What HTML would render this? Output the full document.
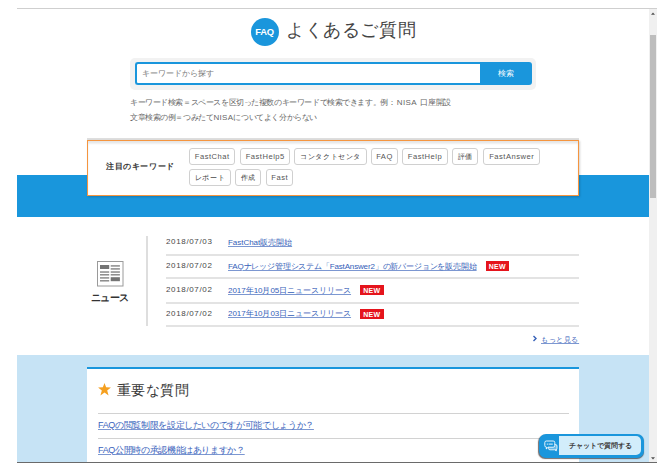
<!DOCTYPE html>
<html><head><meta charset="utf-8">
<style>
*{box-sizing:border-box;margin:0;padding:0}
html,body{width:666px;height:472px;overflow:hidden;background:#fff;font-family:"Liberation Sans",sans-serif;color:#333}
.abs{position:absolute}
#topline{left:17px;top:8px;width:640px;height:1px;background:#cfcfcf}
#botline{left:17px;top:462px;width:640px;height:1px;background:#6a6a6a}
#sb{left:649px;top:9px;width:8px;height:453px;background:#f0f0f0}
#thumb{left:650px;top:35px;width:6px;height:163px;background:#bdbdbd}
#vp{left:17px;top:9px;width:632px;height:453px;overflow:hidden;background:#fff}
/* header */
#faq{left:250.5px;top:18px;width:28px;height:28px;border-radius:50%;background:#1a96dc;color:#fff;font-weight:bold;font-size:9.4px;text-align:center;line-height:27px;letter-spacing:-0.2px}
#title{left:286px;top:18px;font-size:18px;line-height:24px;color:#444;white-space:nowrap;letter-spacing:0.6px}
#sbox{left:130px;top:58px;width:406px;height:32px;border-radius:5px;background:#f2f2f2}
#inp{left:135px;top:62px;width:350px;height:23px;border:2px solid #1a96dc;border-right:none;border-radius:3px 0 0 3px;background:#fff}
#ph{left:142px;top:62px;height:23px;line-height:23px;font-size:8px;color:#777;white-space:nowrap}
#btn{left:480px;top:62px;width:51.5px;height:23px;border-radius:0 3px 3px 0;background:#1a96dc;color:#fff;font-size:8px;line-height:23px;text-align:center}
.help{left:130px;margin-top:0.7px;font-size:8px;color:#666;white-space:nowrap;line-height:10px;letter-spacing:-0.42px}
/* keyword box */
#band{left:17px;top:175px;width:632px;height:42px;background:#1996dc}
#kbox{left:87px;top:140px;width:492px;height:55.5px;background:#fff;border:1.3px solid #f5953f;box-shadow:1px 1px 2px rgba(0,0,0,0.18), inset 0 2.5px 2px rgba(0,0,0,0.1)}
#kshadow{left:87px;top:138.3px;width:492px;height:1.7px;background:rgba(0,0,0,0.13);filter:blur(0.3px)}
#klabel{left:106px;top:161px;font-size:8px;letter-spacing:0.6px;font-weight:bold;color:#333;line-height:11px;white-space:nowrap}
.tag{position:absolute;height:17px;border:1px solid #d0d0d0;border-radius:3px;background:#fff;font-size:7.6px;color:#555;line-height:15px;text-align:center;white-space:nowrap;letter-spacing:0.5px;text-indent:0.5px}
.tj{font-size:7px;letter-spacing:0.6px;text-indent:0.6px;color:#3a3a3a}
/* news */
#vline{left:146px;top:235.5px;width:1.5px;height:90.5px;background:#dedede}
#nlabel{left:90.5px;top:292px;font-size:10px;font-weight:bold;color:#333;line-height:12px;white-space:nowrap;letter-spacing:-0.45px}
.date{position:absolute;left:166px;font-size:8px;color:#484848;line-height:10px;white-space:nowrap;letter-spacing:0.65px}
.nlink{position:absolute;left:228px;top:0;font-size:8px;letter-spacing:-0.03px;color:#3560b8;text-decoration:underline;text-decoration-color:rgba(53,96,184,0.65);line-height:10px;white-space:nowrap}
.sep{position:absolute;height:1px;background:#d2d2d2}
.new{position:absolute;width:23.5px;height:10px;background:#e5141c;color:#fff;font-weight:bold;font-size:7px;line-height:11.2px;text-align:center;letter-spacing:0.25px}
#more{left:541px;top:334.5px;font-size:7px;letter-spacing:0.62px;color:#3560b8;text-decoration:underline;text-decoration-color:rgba(53,96,184,0.65);line-height:10px;white-space:nowrap}
#arrow{left:530.5px;top:334px;width:8px;height:9px}
/* important */
#lblue{left:17px;top:355px;width:632px;height:108px;background:#c6e3f5}
#card{left:87px;top:367px;width:492px;height:100px;background:#fff;border-top:2.5px solid #1a96dc}
#star{left:96.6px;top:381.8px;width:15px;height:14px}
#qtitle{left:117px;top:381px;font-size:14px;line-height:18px;color:#383838;white-space:nowrap;letter-spacing:0.4px}
.qlink{position:absolute;left:98px;font-size:9px;letter-spacing:-0.35px;color:#3a63bc;text-decoration:underline;text-decoration-color:rgba(53,96,184,0.65);line-height:10px;white-space:nowrap}
/* chat */
#chat{left:538.5px;top:433.5px;width:105.2px;height:24.5px;border-radius:7px;background:#1a96dc;box-shadow:-0.5px 1px 1px rgba(40,30,30,0.65)}
#chatin{left:559px;top:436px;width:82.2px;height:19px;border-radius:0 5px 5px 0;background:#d2edfb}
#chattxt{left:569px;top:441px;font-size:7.2px;font-weight:bold;color:#404040;line-height:10px;white-space:nowrap}
#chaticon{left:543.6px;top:439.6px;width:14px;height:12px}
</style></head><body>
<div id="topline" class="abs"></div>
<div id="vp" class="abs"></div>
<div id="sb" class="abs"></div>
<div id="thumb" class="abs"></div>
<svg class="abs" style="left:650px;top:11px" width="6" height="5"><path d="M1 3.8 L3 1.6 L5 3.8 Z" fill="#505050"/></svg>
<svg class="abs" style="left:650px;top:456px" width="6" height="5"><path d="M1 1.2 L3 3.4 L5 1.2 Z" fill="#505050"/></svg>

<!-- header -->
<div id="faq" class="abs">FAQ</div>
<div id="title" class="abs">よくあるご質問</div>
<div id="sbox" class="abs"></div>
<div id="inp" class="abs"></div>
<div id="ph" class="abs">キーワードから探す</div>
<div id="btn" class="abs">検索</div>
<div class="abs help" style="top:97px">キーワード検索＝スペースを区切った複数のキーワードで検索できます。例：<span style="letter-spacing:0.35px;margin-left:1.5px">NISA</span><span style="display:inline-block;width:3.5px"></span>口座開設</div>
<div class="abs help" style="top:112px">文章検索の例＝つみたて<span style="letter-spacing:0.35px">NISA</span>についてよく分からない</div>

<!-- keywords -->
<div id="band" class="abs"></div>
<div id="kshadow" class="abs"></div>
<div id="kbox" class="abs"></div>
<div id="klabel" class="abs">注目のキーワード</div>
<div class="tag" style="left:189px;top:148px;width:46px">FastChat</div>
<div class="tag" style="left:240px;top:148px;width:50px">FastHelp5</div>
<div class="tag tj" style="left:294px;top:148px;width:72.5px">コンタクトセンタ</div>
<div class="tag" style="left:371px;top:148px;width:26.5px">FAQ</div>
<div class="tag" style="left:402px;top:148px;width:45.5px">FastHelp</div>
<div class="tag tj" style="left:452px;top:148px;width:26px">評価</div>
<div class="tag" style="left:483px;top:148px;width:57px">FastAnswer</div>
<div class="tag tj" style="left:189px;top:169px;width:41.5px">レポート</div>
<div class="tag tj" style="left:235px;top:169px;width:26px">作成</div>
<div class="tag" style="left:266px;top:169px;width:27px">Fast</div>

<!-- news -->
<div id="vline" class="abs"></div>
<svg class="abs" style="left:97px;top:261px" width="27" height="26" viewBox="0 0 27 26">
<rect x="0.5" y="0.5" width="25.5" height="24.5" fill="#fff" stroke="#9a9a9a" stroke-width="1"/>
<rect x="3" y="4" width="9.2" height="4" fill="#747474"/>
<rect x="13.7" y="4.3" width="9.2" height="1.25" fill="#747474"/>
<rect x="13.7" y="7.3" width="9.2" height="1.25" fill="#747474"/>
<rect x="3" y="10.4" width="9.2" height="1.25" fill="#747474"/>
<rect x="13.7" y="10.4" width="9.2" height="1.25" fill="#747474"/>
<rect x="3" y="13.2" width="9.2" height="1.25" fill="#747474"/>
<rect x="13.7" y="13.2" width="9.2" height="1.25" fill="#747474"/>
<rect x="3" y="16.3" width="9.2" height="1.25" fill="#747474"/>
<rect x="3" y="19.2" width="9.2" height="1.25" fill="#747474"/>
<rect x="13.7" y="16.2" width="9.2" height="4" fill="#747474"/>
</svg>
<div id="nlabel" class="abs">ニュース</div>

<div class="date" style="top:237px">2018/07/03</div>
<div class="nlink" style="top:238px">FastChat販売開始</div>
<div class="sep" style="left:166px;top:254px;width:413px;height:2px;background:#e3e3e3"></div>
<div class="date" style="top:261px">2018/07/02</div>
<div class="nlink" style="top:262px;letter-spacing:-0.16px">FAQナレッジ管理システム「FastAnswer2」の新バージョンを販売開始</div>
<div class="new" style="left:485.5px;top:261px">NEW</div>
<div class="sep" style="left:166px;top:277.4px;width:413px;height:2px;background:#e3e3e3"></div>
<div class="date" style="top:285px">2018/07/02</div>
<div class="nlink" style="top:286px">2017年10月05日ニュースリリース</div>
<div class="new" style="left:360px;top:284.5px">NEW</div>
<div class="sep" style="left:166px;top:301.5px;width:413px;height:2px;background:#e3e3e3"></div>
<div class="date" style="top:308.5px">2018/07/02</div>
<div class="nlink" style="top:309px">2017年10月03日ニュースリリース</div>
<div class="new" style="left:360px;top:308.8px">NEW</div>
<div class="sep" style="left:166px;top:325.4px;width:413px;height:2px;background:#e3e3e3"></div>
<svg id="arrow" class="abs" viewBox="0 0 8 9"><path d="M2.5 2 L5 4.5 L2.5 7" fill="none" stroke="#3560b8" stroke-width="1.4"/></svg>
<div id="more" class="abs">もっと見る</div>

<!-- important -->
<div id="lblue" class="abs"></div>
<div id="card" class="abs"></div>
<svg id="star" class="abs" viewBox="0 0 24 24"><path d="M12 1.8 L14.8 9.2 L23 9.4 L16.6 14.4 L19 23 L12 18.2 L5 23 L7.4 14.4 L1 9.4 L9.2 9.2 Z" fill="#f5a020"/></svg>
<div id="qtitle" class="abs">重要な質問</div>
<div class="sep" style="left:98px;top:412.5px;width:471px"></div>
<div class="qlink" style="top:420px">FAQの閲覧制限を設定したいのですが可能でしょうか？</div>
<div class="sep" style="left:98px;top:438px;width:471px"></div>
<div class="qlink" style="top:444.5px">FAQ公開時の承認機能はありますか？</div>

<!-- chat -->
<div id="chat" class="abs"></div>
<div id="chatin" class="abs"></div>
<svg id="chaticon" class="abs" viewBox="0 0 14 12">
<path d="M4.5 4.5 H11.5 Q13 4.5 13 6 V8.3 Q13 9.8 11.5 9.8 H12.6 L12.3 10.8 L10.8 9.8 H6 Q4.5 9.8 4.5 8.3 Z" fill="rgba(255,255,255,0.35)" stroke="#fff" stroke-width="0.8"/>
<path d="M2.3 1 H9.2 Q10.8 1 10.8 2.6 V5.4 Q10.8 7.2 9.2 7.2 H4.2 L2.2 9 L2.6 7.2 H2.3 Q0.8 7.2 0.8 5.4 V2.6 Q0.8 1 2.3 1 Z" fill="#1a96dc" stroke="#fff" stroke-width="0.9"/>
<circle cx="3.3" cy="4.1" r="0.6" fill="#fff"/><rect x="4.6" y="3.6" width="4.2" height="1" fill="#fff" opacity="0.9"/>
</svg>
<div id="chattxt" class="abs">チャットで質問する</div>

<div id="botline" class="abs"></div>
</body></html>
